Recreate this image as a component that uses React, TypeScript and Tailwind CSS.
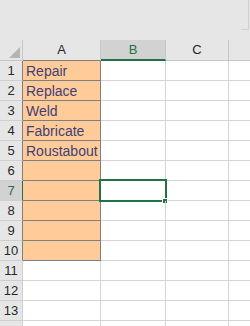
const rows = [
  "Repair",
  "Replace",
  "Weld",
  "Fabricate",
  "Roustabout",
  "",
  "",
  "",
  "",
  "",
  "",
  "",
  "",
  "",
];

const font = "font-['Liberation_Sans',Arial,sans-serif]";

export default function App() {
  return (
    <div className={`w-[250px] h-[326px] overflow-hidden bg-white ${font}`}>
      {/* ribbon / formula bar strip */}
      <div className="h-[40px] bg-[#e6e6e6] flex justify-end">
        <div className="w-[8px] h-[30px] mr-[1px] border-r border-b border-[#d0d0d0]" />
      </div>

      <div className="grid grid-cols-[23px_78px_65px_63px_1fr]">
        {/* column headers */}
        <div className="h-[21px] bg-[#e6e6e6] border-r border-b border-[#c6c6c6] flex items-end justify-end pr-[2px] pb-[2px]">
          <svg width="12" height="11" viewBox="0 0 12 11">
            <polygon points="12,0 12,11 1,11" fill="#b4b4b4" />
          </svg>
        </div>
        <div className="h-[21px] bg-[#e6e6e6] border-r border-[#c6c6c6] border-b border-b-[#7f7f7f] flex items-center justify-center text-[13px] text-[#262626]">
          A
        </div>
        <div className="h-[21px] bg-[#d2d2d2] border-r border-r-[#c6c6c6] border-b-2 border-b-[#217346] flex items-center justify-center text-[13px] text-[#217346]">
          B
        </div>
        <div className="h-[21px] bg-[#e6e6e6] border-r border-b border-[#c6c6c6] flex items-center justify-center text-[13px] text-[#262626]">
          C
        </div>
        <div className="h-[21px] bg-[#e6e6e6] border-b border-[#c6c6c6]" />

        {rows.map((text, i) => {
          const n = i + 1;
          const input = n <= 10;
          const selected = n === 7;
          return (
            <Row key={n} n={n} text={text} input={input} selected={selected} />
          );
        })}
      </div>
    </div>
  );
}

function Row({
  n,
  text,
  input,
  selected,
}: {
  n: number;
  text: string;
  input: boolean;
  selected: boolean;
}) {
  return (
    <>
      <div
        className={`h-[20px] border-b border-b-[#cfcfcf] border-r flex items-center justify-center text-[13px] ${
          selected
            ? "bg-[#d2d2d2] text-[#217346] border-r-[#217346]"
            : input
              ? "bg-[#e6e6e6] text-[#262626] border-r-[#7f7f7f]"
              : "bg-[#e6e6e6] text-[#262626] border-r-[#cfcfcf]"
        }`}
      >
        {n < 14 ? n : ""}
      </div>
      <div
        className={`h-[20px] border-r border-b pl-[3px] text-[14px] leading-[20px] whitespace-nowrap overflow-hidden ${
          input
            ? "bg-[#ffcc99] border-[#7f7f7f] text-[#3f3f76]"
            : "border-[#d4d4d4]"
        }`}
      >
        {text}
      </div>
      <div className="h-[20px] border-r border-b border-[#d4d4d4] relative">
        {selected && (
          <>
            <div className="absolute -left-[2px] -top-[2px] w-[68px] h-[23px] border-2 border-[#217346]" />
            <div className="absolute left-[61px] top-[17px] w-[6px] h-[6px] bg-[#217346] border border-white" />
          </>
        )}
      </div>
      <div className="h-[20px] border-r border-b border-[#d4d4d4]" />
      <div className="h-[20px] border-b border-[#d4d4d4]" />
    </>
  );
}
